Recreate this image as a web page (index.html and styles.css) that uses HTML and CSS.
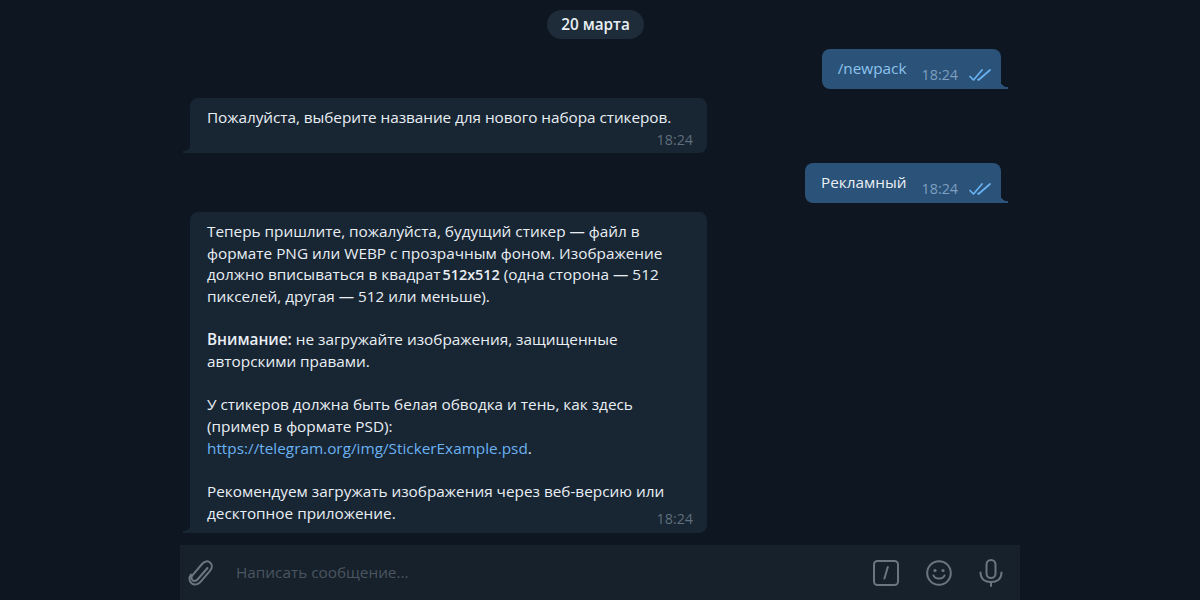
FILE: index.html
```html
<!DOCTYPE html>
<html lang="ru">
<head>
    <meta charset="UTF-8">
    <meta name="viewport" content="width=device-width, initial-scale=1.0">
    <title>Telegram</title>
    <link rel="stylesheet" href="styles.css">
</head>
<body>
    <main class="chat">
        <section class="messages">
            <div class="date-pill">20 марта</div>

            <div class="bubble bubble-out">
                <span class="command">/newpack</span>
                <span class="meta">
                    <span class="time">18:24</span>
                    <svg class="checks" width="22" height="12" viewBox="0 0 22 12" fill="none" stroke="currentColor" stroke-width="1.7" stroke-linecap="round" stroke-linejoin="round">
                        <path d="M1 7.5 L4.5 11 L13 1"/>
                        <path d="M9 10.5 L9.5 11 L21 1"/>
                    </svg>
                </span>
            </div>

            <div class="bubble bubble-in">
                <p class="tight">Пожалуйста, выберите название для нового набора стикеров.</p>
                <div class="time time-below">18:24</div>
            </div>

            <div class="bubble bubble-out">
                <span>Рекламный</span>
                <span class="meta">
                    <span class="time">18:24</span>
                    <svg class="checks" width="22" height="12" viewBox="0 0 22 12" fill="none" stroke="currentColor" stroke-width="1.7" stroke-linecap="round" stroke-linejoin="round">
                        <path d="M1 7.5 L4.5 11 L13 1"/>
                        <path d="M9 10.5 L9.5 11 L21 1"/>
                    </svg>
                </span>
            </div>

            <div class="bubble bubble-in bubble-last">
                <p>Теперь пришлите, пожалуйста, будущий стикер — файл в<br>формате PNG или WEBP с прозрачным фоном. Изображение<br>должно вписываться в квадрат <b class="size">512x512</b> (одна сторона — 512<br>пикселей, другая — 512 или меньше).</p>
                <p><b>Внимание:</b> не загружайте изображения, защищенные<br>авторскими правами.</p>
                <p>У стикеров должна быть белая обводка и тень, как здесь<br>(пример в формате PSD):<br><a href="#">https://telegram.org/img/StickerExample.psd</a>.</p>
                <p>Рекомендуем загружать изображения через веб-версию или<br>десктопное приложение.</p>
                <div class="time time-inline">18:24</div>
            </div>
        </section>

        <footer class="composer">
            <svg class="icon" width="26" height="28" viewBox="0 0 26 28" fill="none" stroke="currentColor" stroke-width="2" stroke-linecap="round" stroke-linejoin="round">
                <path d="M19.5 9 L9.5 20.5 C7.8 22.4 5.6 22.2 4.4 21 C3.1 19.6 3.2 17.6 4.8 15.8 L14.5 4.5 C16.8 2 20 1.6 22.3 3.8 C24.6 6 24.2 9.4 22 11.8 L12.5 22.8 C10 25.6 6.2 26.4 3.6 24.2 C1 22 0.8 18.4 3 15.6"/>
            </svg>
            <div class="placeholder">Написать сообщение...</div>
            <div class="composer-icons">
                <svg class="icon" width="26" height="26" viewBox="0 0 26 26" fill="none" stroke="currentColor" stroke-width="2" stroke-linecap="round">
                    <rect x="1" y="1" width="24" height="24" rx="3.5"/>
                    <path d="M14.8 7 L11.4 18.5"/>
                </svg>
                <svg class="icon" width="26" height="26" viewBox="0 0 26 26" fill="none" stroke="currentColor" stroke-width="2" stroke-linecap="round">
                    <circle cx="13" cy="13" r="11.8"/>
                    <path d="M7.5 15.5 C9 19.5 17 19.5 18.5 15.5"/>
                    <circle cx="9" cy="10.5" r="1.6" fill="currentColor" stroke="none"/>
                    <circle cx="17" cy="10.5" r="1.6" fill="currentColor" stroke="none"/>
                </svg>
                <svg class="icon" width="24" height="28" viewBox="0 0 24 28" fill="none" stroke="currentColor" stroke-width="2" stroke-linecap="round">
                    <rect x="7.5" y="1" width="9" height="18" rx="4.5"/>
                    <path d="M1.5 13.5 C1.5 20 6 23 12 23 C18 23 22.5 20 22.5 13.5"/>
                    <path d="M12 23 V27"/>
                </svg>
            </div>
        </footer>
    </main>
</body>
</html>
```

FILE: styles.css
```css
* {
    margin: 0;
    padding: 0;
    box-sizing: border-box;
}

body {
    font-family: "Open Sans", "Noto Sans", sans-serif;
    font-size: 15.33px;
    line-height: 21.67px;
    color: #e9eff4;
    background: #0e1621;
    height: 100vh;
    overflow: hidden;
}

.chat {
    width: 840px;
    height: 600px;
    margin: 0 auto;
    display: flex;
    flex-direction: column;
}

.messages {
    flex: 1;
    min-height: 0;
    display: flex;
    flex-direction: column;
    align-items: flex-start;
    padding: 10px 19px 0 10px;
}

.date-pill {
    align-self: center;
    height: 29px;
    padding: 0 14px;
    margin-bottom: 10px;
    border-radius: 15px;
    background: #1e2c3a;
    font-size: 15.3px;
    font-weight: 600;
    line-height: 29px;
}

.bubble {
    position: relative;
    border-radius: 8px;
}

/* tail sticks out of the bottom corner */
.bubble::after {
    content: "";
    position: absolute;
    bottom: 0;
    width: 8px;
    height: 10px;
}

.bubble-out {
    align-self: flex-end;
    display: flex;
    height: 40px;
    padding: 9px 10px 0 16px;
    margin-bottom: 9px;
    background: #2b5278;
    border-bottom-right-radius: 0;
}

.bubble-out::after {
    right: -7px;
    background: radial-gradient(circle at 100% 0, transparent 8px, #2b5278 8.5px);
}

.bubble-in {
    width: 517px;
    padding: 9px 16px 9px 17px;
    margin-bottom: 10px;
    background: #182533;
    border-bottom-left-radius: 0;
}

.bubble-last {
    height: 321px;
    margin-bottom: 0;
}

.bubble-in::after {
    left: -7px;
    background: radial-gradient(circle at 0 0, transparent 8px, #182533 8.5px);
}

.bubble-in p + p {
    margin-top: 21.67px;
}

.bubble-in .tight {
    letter-spacing: -0.05px;
}

.bubble-in b {
    font-weight: 600;
}

.bubble-in .size {
    font-size: 14.4px;
    margin-left: -2px;
}

.bubble-in a {
    color: #6ab2f2;
    text-decoration: none;
}

.command {
    color: #8cc4ee;
}

.meta {
    display: flex;
    align-items: center;
    height: 22px;
    margin: 6px 0 0 15px;
    color: #7d9fc0;
}

.time {
    font-size: 14.3px;
}

.checks {
    margin-left: 11px;
    color: #6ab2f2;
}

.time-below,
.time-inline {
    text-align: right;
    color: #5f6e7b;
    margin-right: -2px;
}

.time-below {
    height: 15.33px;
    line-height: 22px;
}

.time-inline {
    height: 0;
    margin-top: -16px;
    line-height: 22px;
}

.composer {
    flex-shrink: 0;
    height: 55px;
    display: flex;
    align-items: center;
    padding: 0 17px 0 8px;
    background: #17212b;
}

.icon {
    flex-shrink: 0;
    color: #6b7680;
}

.placeholder {
    flex: 1;
    margin-left: 22px;
    color: #4a5560;
}

.composer-icons {
    display: flex;
    align-items: center;
    gap: 27px;
}
```
